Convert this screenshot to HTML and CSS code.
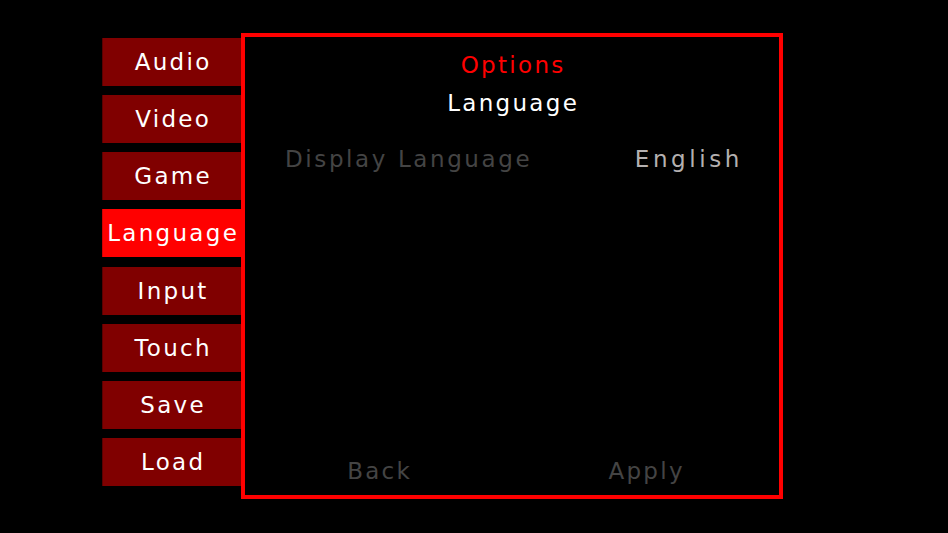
FILE: index.html
```html
<!DOCTYPE html>
<html>
<head>
<meta charset="utf-8">
<link rel="stylesheet" href="styles.css">
</head>
<body>
<div class="screen">
  <nav class="sidebar">
    <div class="tab">Audio</div>
    <div class="tab">Video</div>
    <div class="tab">Game</div>
    <div class="tab active">Language</div>
    <div class="tab">Input</div>
    <div class="tab">Touch</div>
    <div class="tab">Save</div>
    <div class="tab">Load</div>
  </nav>
  <section class="panel">
    <div class="title">Options</div>
    <div class="heading">Language</div>
    <div class="row">
      <span class="label">Display Language</span>
      <span class="value">English</span>
    </div>
    <div class="footer">
      <span class="action">Back</span>
      <span class="action">Apply</span>
    </div>
  </section>
</div>
</body>
</html>
```

FILE: styles.css
```css
html, body {
  margin: 0;
  padding: 0;
  background: #000;
}
body {
  width: 948px;
  height: 533px;
  overflow: hidden;
  font-family: "DejaVu Sans", "Verdana", sans-serif;
  font-size: 23px;
  letter-spacing: 2.3px;
}
.screen {
  display: flex;
  padding-top: 33px;
  padding-left: 102px;
}
.sidebar {
  width: 139px;
  margin-top: 5px;
  display: flex;
  flex-direction: column;
  gap: 9.14px;
}
.tab {
  height: 48px;
  box-sizing: border-box;
  background: #800000;
  border-left: 1px solid #5a0000;
  color: #fff;
  display: flex;
  align-items: center;
  justify-content: center;
  padding-left: 2.3px;
}
.tab.active {
  background: #ff0000;
  border-left-color: #d00000;
}
.panel {
  width: 542px;
  height: 466px;
  box-sizing: border-box;
  border: 4px solid #ff0000;
  display: flex;
  flex-direction: column;
}
.title {
  margin-top: 9px;
  line-height: 38px;
  text-align: center;
  color: #ff0000;
  padding-left: 2.3px;
}
.heading {
  line-height: 38px;
  text-align: center;
  color: #fff;
  padding-left: 2.3px;
}
.row {
  margin-top: 17.5px;
  line-height: 38px;
  display: flex;
  justify-content: space-between;
  padding: 0 36px 0 40px;
}
.label {
  color: #444;
  letter-spacing: 2.6px;
}
.value {
  color: #b4b0b0;
  letter-spacing: 3.6px;
}
.footer {
  margin-top: auto;
  padding-bottom: 5px;
  display: grid;
  grid-template-columns: 1fr 1fr;
  line-height: 38px;
}
.action {
  text-align: center;
  color: #444;
  padding-left: 2.3px;
}
```
